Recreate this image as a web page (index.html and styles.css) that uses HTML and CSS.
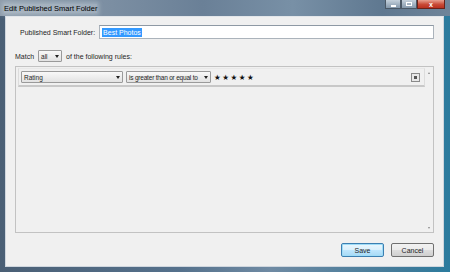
FILE: index.html
```html
<!DOCTYPE html>
<html lang="en">
<head>
    <meta charset="UTF-8">
    <title>Edit Published Smart Folder</title>
    <link rel="stylesheet" href="styles.css">
</head>
<body>
    <div class="window">
        <!-- Title bar -->
        <div class="titlebar">
            <span class="title">Edit Published Smart Folder</span>
            <div class="caption-btns">
                <span class="cap-btn min"><i></i></span>
                <span class="cap-btn max"><i></i></span>
                <span class="cap-btn close">x</span>
            </div>
        </div>

        <!-- Dialog body -->
        <div class="client">
            <div class="name-row">
                <label>Published Smart Folder:</label>
                <div class="text-input"><span class="selected">Best Photos</span></div>
            </div>

            <div class="match-row">
                <span>Match</span>
                <div class="select small"><span>all</span><b class="arrow"></b></div>
                <span>of the following rules:</span>
            </div>

            <div class="rules">
                <div class="rules-list">
                    <div class="rule">
                        <div class="select field"><span>Rating</span><b class="arrow"></b></div>
                        <div class="select op"><span>is greater than or equal to</span><b class="arrow"></b></div>
                        <span class="stars">★★★★★</span>
                        <span class="add-btn"><i></i></span>
                    </div>
                </div>
                <div class="scrollbar">
                    <span class="up"></span>
                    <span class="down"></span>
                </div>
            </div>

            <div class="buttons">
                <button class="btn default">Save</button>
                <button class="btn">Cancel</button>
            </div>
        </div>
    </div>
</body>
</html>
```

FILE: styles.css
```css
body, html {
    margin: 0;
    width: 450px;
    height: 272px;
    overflow: hidden;
}

/* Window frame */
.window {
    width: 450px;
    height: 272px;
    display: flex;
    flex-direction: column;
    background: linear-gradient(90deg, #4a5f75 0%, #55718c 40%, #6f8aa3 60%, #3f7a99 90%, #2b7b9e 100%);
    font-family: "Liberation Sans", Arial, sans-serif;
    font-size: 7px;
    color: #1e1e1e;
}

.titlebar {
    height: 16px;
    display: flex;
    align-items: center;
    justify-content: space-between;
    padding: 0 5px 0 4px;
    background: linear-gradient(90deg, #8e9cab 0%, #7b8ea2 25%, #6a8097 45%, #7890a6 65%, #5f7890 85%, #6f8499 100%);
}

.title {
    color: #000;
    font-size: 7.5px;
    background: rgba(220, 228, 236, 0.35);
    box-shadow: 0 0 4px 2px rgba(220, 228, 236, 0.35);
}

.caption-btns {
    display: flex;
    align-self: flex-start;
}

.cap-btn {
    height: 8px;
    width: 14px;
    border: 1px solid #4a5866;
    border-top: none;
    background: linear-gradient(180deg, #c5d1dc, #8498ab);
    display: flex;
    align-items: center;
    justify-content: center;
}

.cap-btn.min i {
    width: 5px;
    height: 2px;
    background: #fff;
    margin-top: 3px;
}

.cap-btn.max i {
    width: 4px;
    height: 2px;
    border: 1px solid #fff;
}

.cap-btn.close {
    width: 26px;
    border-color: #6a2219;
    background: linear-gradient(180deg, #e8a090, #c94a36 55%, #b9301f);
    color: #fff;
    font-size: 7px;
    font-weight: bold;
    line-height: 1;
}

/* Client area */
.client {
    flex: 1;
    margin: 0 6px 5px 5px;
    background: #f0f0f0;
    border: 1px solid #cfd6de;
    border-top-color: #e2e6ea;
    display: flex;
    flex-direction: column;
    padding: 0 9px 0 9px;
}

.name-row {
    display: flex;
    align-items: center;
    gap: 4px;
    margin-top: 8px;
    padding-left: 5px;
}

.text-input {
    flex: 1;
    height: 12px;
    background: #fff;
    border: 1px solid #abb3bb;
    border-top-color: #8e99a4;
    display: flex;
    align-items: center;
    padding-left: 2px;
}

.selected {
    background: #3399ff;
    color: #fff;
    padding: 1px 1px;
}

.match-row {
    display: flex;
    align-items: center;
    gap: 4px;
    margin-top: 11px;
}

/* Dropdowns */
.select {
    height: 10px;
    background: linear-gradient(180deg, #f8f8f8, #e2e2e2);
    border: 1px solid #9a9a9a;
    border-radius: 1px;
    display: flex;
    align-items: center;
    justify-content: space-between;
    padding: 0 2px 0 2px;
    font-size: 6.5px;
    white-space: nowrap;
    overflow: hidden;
}

.select.small {
    width: 18px;
}

.select.field {
    width: 96px;
}

.select.op {
    width: 79px;
    letter-spacing: -0.2px;
}

.arrow {
    flex: none;
    width: 0;
    height: 0;
    border-left: 2px solid transparent;
    border-right: 2px solid transparent;
    border-top: 3px solid #222;
    margin-left: 3px;
}

/* Rules box */
.rules {
    margin-top: 4px;
    height: 164px;
    border: 1px solid #c2c2c2;
    display: flex;
    padding: 1px 0 0 2px;
}

.rules-list {
    flex: 1;
    display: flex;
    flex-direction: column;
}

.rule {
    display: flex;
    align-items: center;
    gap: 3px;
    height: 16px;
    padding: 0 4px 0 2px;
    border: 1px solid #dcdcdc;
    border-bottom: 2px solid #c8c8c8;
    border-top-color: #e8e8e8;
}

.stars {
    flex: 1;
    font-family: "DejaVu Sans", sans-serif;
    font-size: 7.5px;
    letter-spacing: 1.5px;
    color: #111;
}

.add-btn {
    width: 7px;
    height: 7px;
    border: 1px solid #8a8a8a;
    background: #e8e8e8;
    display: flex;
    align-items: center;
    justify-content: center;
}

.add-btn i {
    width: 3px;
    height: 3px;
    background: #555;
}

.scrollbar {
    width: 8px;
    display: flex;
    flex-direction: column;
    justify-content: space-between;
    align-items: center;
    padding: 4px 0 3px;
}

.scrollbar .up {
    border-left: 1.5px solid transparent;
    border-right: 1.5px solid transparent;
    border-bottom: 2px solid #888;
}

.scrollbar .down {
    border-left: 1.5px solid transparent;
    border-right: 1.5px solid transparent;
    border-top: 2px solid #888;
}

/* Bottom buttons */
.buttons {
    display: flex;
    justify-content: flex-end;
    gap: 7px;
    margin-top: 10px;
}

.btn {
    width: 43px;
    height: 14px;
    padding: 0;
    font-family: "Liberation Sans", Arial, sans-serif;
    font-size: 7px;
    color: #1e1e1e;
    border: 1px solid #707070;
    border-radius: 2px;
    background: linear-gradient(180deg, #f2f2f2 0%, #ebebeb 50%, #dddddd 51%, #cfcfcf 100%);
}

.btn.default {
    border-color: #3c7fb1;
    box-shadow: inset 0 0 0 1px #9fdcf7;
    background: linear-gradient(180deg, #eaf6fd 0%, #d9f0fc 50%, #bee6fd 51%, #a7d9f5 100%);
}
```
